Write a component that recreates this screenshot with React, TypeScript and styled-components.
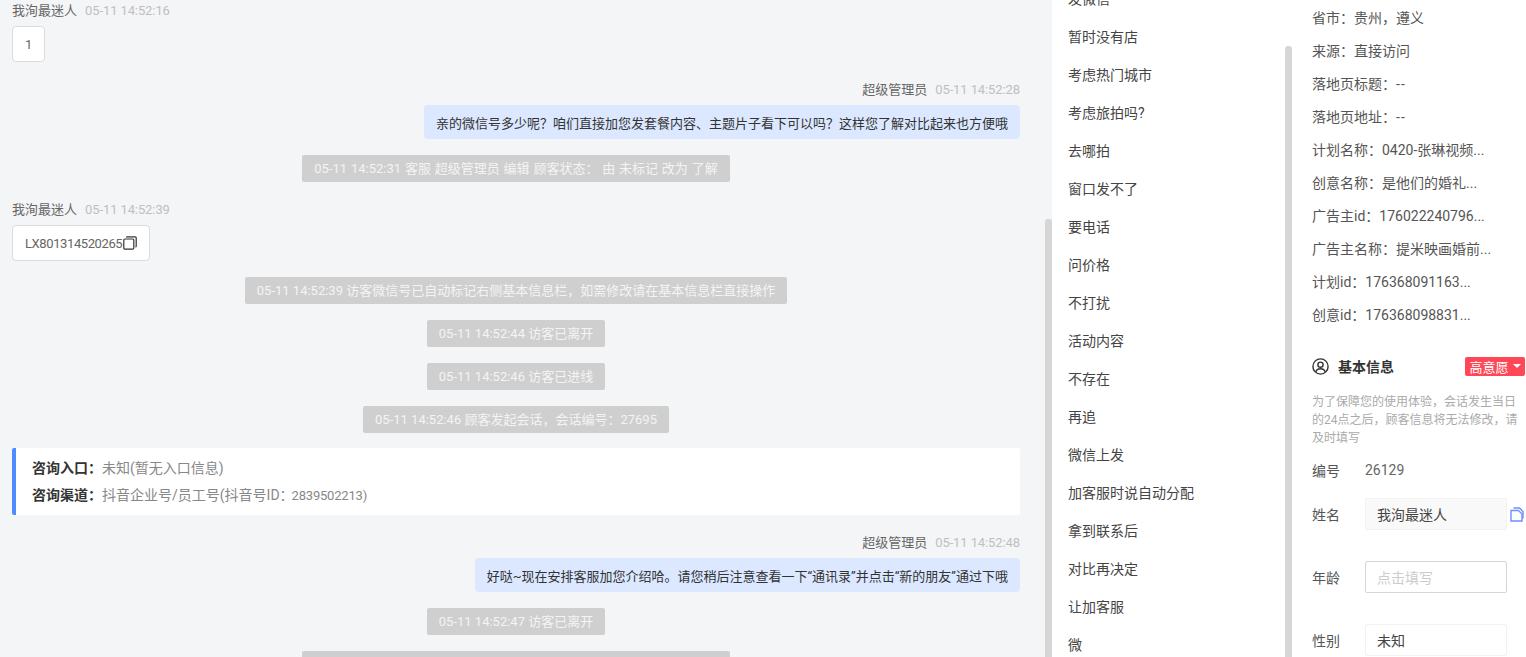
import React from 'react';
import styled, { createGlobalStyle } from 'styled-components';

const GlobalStyle = createGlobalStyle`
  html, body {
    margin: 0;
    padding: 0;
    height: 100%;
    overflow: hidden;
    background: #f4f5f7;
  }
  * {
    box-sizing: border-box;
  }
  body {
    font-family: Roboto, "Noto Sans CJK SC", sans-serif;
    font-size: 13px;
    color: #333;
  }
`;

const Layout = styled.div`
  display: grid;
  grid-template-columns: 1052px 240px 234px;
  width: 1526px;
  height: 657px;
  overflow: hidden;
`;

const ChatPane = styled.main`
  position: relative;
  height: 657px;
  overflow: hidden;
  padding: 1px 32px 0 12px;
  display: flex;
  flex-direction: column;
  background: #f4f5f7;
`;

const Scrollbar = styled.div<{ $top: number }>`
  position: absolute;
  top: ${(p) => p.$top}px;
  right: 0;
  bottom: 0;
  width: 7px;
  background: #d6d6d6;
  border-radius: 3px 3px 0 0;
`;

const Message = styled.div<{ $mine?: boolean }>`
  display: flex;
  flex-direction: column;
  flex-shrink: 0;
  align-items: ${(p) => (p.$mine ? 'flex-end' : 'flex-start')};
  margin-top: 18px;

  &:first-child {
    margin-top: 0;
  }
`;

const Meta = styled.div`
  display: flex;
  gap: 8px;
  height: 18px;
  line-height: 20px;
  margin-bottom: 7px;
  color: #666;
  white-space: nowrap;
`;

const Time = styled.span`
  color: #c0c0c0;
  letter-spacing: -0.1px;
`;

const IncomingBubble = styled.div`
  display: flex;
  align-items: center;
  height: 36px;
  padding: 0 12px;
  background: #fff;
  border: 1px solid #dcdcdc;
  border-radius: 4px;
  color: #666;
  letter-spacing: -0.4px;
  white-space: nowrap;
`;

const OutgoingBubble = styled.div`
  display: flex;
  align-items: center;
  height: 34px;
  padding: 0 12px;
  background: #dbe8ff;
  border-radius: 4px;
  color: #333;
  white-space: nowrap;
`;

const SystemNote = styled.div<{ $spaced?: boolean }>`
  align-self: center;
  flex-shrink: 0;
  height: 27px;
  line-height: 27px;
  margin-top: 16px;
  padding: 0 12px;
  background: #cfcfcf;
  border-radius: 2px;
  color: #f4f4f4;
  word-spacing: ${(p) => (p.$spaced ? '0.6px' : '0')};
  white-space: nowrap;
`;

const EntryCard = styled.section`
  flex-shrink: 0;
  height: 67px;
  margin-top: 15px;
  padding: 7px 16px;
  background: #fff;
  border-left: 4px solid #4e8cff;
  border-radius: 2px;
`;

const EntryLine = styled.div`
  height: 27px;
  line-height: 27px;
  font-size: 14px;
  color: #888;
  white-space: nowrap;

  b {
    font-weight: 700;
    color: #333;
  }
`;

const EntryNumber = styled.span`
  font-size: 13px;
  letter-spacing: -0.2px;
  margin-left: -2px;
`;

const ListPane = styled.aside`
  position: relative;
  height: 657px;
  overflow: hidden;
  background: #fff;
`;

const ReplyList = styled.ul`
  list-style: none;
  margin: -20px 0 0;
  padding: 0 0 0 16px;
`;

const ReplyItem = styled.li`
  height: 38px;
  line-height: 38px;
  font-size: 14px;
  color: #444;
  white-space: nowrap;
`;

const InfoPane = styled.aside`
  height: 657px;
  overflow: hidden;
  background: #fff;
  padding: 2px 0 0 20px;
  font-size: 14px;
`;

const SourceRow = styled.div`
  height: 33px;
  line-height: 33px;
  color: #555;
  white-space: nowrap;
`;

const EmptyValue = styled.span`
  font-variant-ligatures: none;
  letter-spacing: 1.2px;
`;

const InfoHeader = styled.div`
  display: flex;
  align-items: center;
  height: 20px;
  margin-top: 24px;
`;

const InfoTitle = styled.h3`
  flex: 1;
  margin: 0 0 0 9px;
  font-size: 14px;
  font-weight: 700;
  color: #333;
`;

const IntentTag = styled.div`
  display: flex;
  align-items: center;
  justify-content: center;
  gap: 4px;
  width: 60px;
  height: 19px;
  margin-right: 1px;
  background: #ff4757;
  border-radius: 2px;
  font-size: 13px;
  color: #fff;
`;

const Caret = styled.span`
  width: 0;
  height: 0;
  border-left: 4px solid transparent;
  border-right: 4px solid transparent;
  border-top: 4.5px solid #fff;
`;

const Notice = styled.p`
  width: 210px;
  margin: 17px 0 0;
  font-size: 12px;
  line-height: 18px;
  color: #aaa;
`;

const FieldRow = styled.div<{ $gap: number }>`
  display: flex;
  align-items: center;
  height: 32px;
  margin-top: ${(p) => p.$gap}px;
`;

const FieldLabel = styled.label`
  width: 53px;
  flex-shrink: 0;
  color: #555;
`;

const FieldValue = styled.span`
  color: #666;
`;

const FieldBox = styled.div<{ $variant: 'filled' | 'input' | 'plain' }>`
  display: flex;
  align-items: center;
  width: 142px;
  height: 32px;
  padding: 0 11px;
  border-radius: 2px;
  border: 1px solid ${(p) => (p.$variant === 'input' ? '#d6d6d6' : '#f2f2f2')};
  background: ${(p) => (p.$variant === 'filled' ? '#f9f9f9' : '#fff')};
  color: ${(p) => (p.$variant === 'input' ? '#ccc' : '#444')};
`;

const CopyButton = styled.span`
  display: flex;
  margin-left: 3px;
`;

const CopyInline = styled.svg`
  margin-left: 1px;
`;

const sources = [
  '省市：贵州，遵义',
  '来源：直接访问',
  '落地页标题：--',
  '落地页地址：--',
  '计划名称：0420-张琳视频...',
  '创意名称：是他们的婚礼...',
  '广告主id：176022240796...',
  '广告主名称：提米映画婚前...',
  '计划id：176368091163...',
  '创意id：176368098831...',
];

const replies = [
  '发微信',
  '暂时没有店',
  '考虑热门城市',
  '考虑旅拍吗?',
  '去哪拍',
  '窗口发不了',
  '要电话',
  '问价格',
  '不打扰',
  '活动内容',
  '不存在',
  '再追',
  '微信上发',
  '加客服时说自动分配',
  '拿到联系后',
  '对比再决定',
  '让加客服',
  '微',
];

const UserCircleIcon = () => (
  <svg width="17" height="17" viewBox="0 0 17 17" fill="none" stroke="#333" strokeWidth="1.4">
    <circle cx="8.5" cy="8.5" r="7.6" />
    <circle cx="8.5" cy="6.7" r="2.6" />
    <path d="M3.8 14.2c.5-2.4 2.4-3.4 4.7-3.4s4.2 1 4.7 3.4" />
  </svg>
);

export default function App() {
  return (
    <Layout>
      <GlobalStyle />
      <ChatPane>
        <Message>
          <Meta>
            <span>我洵最迷人</span>
            <Time>05-11 14:52:16</Time>
          </Meta>
          <IncomingBubble>1</IncomingBubble>
        </Message>
        <Message $mine>
          <Meta>
            <span>超级管理员</span>
            <Time>05-11 14:52:28</Time>
          </Meta>
          <OutgoingBubble>亲的微信号多少呢？咱们直接加您发套餐内容、主题片子看下可以吗？这样您了解对比起来也方便哦</OutgoingBubble>
        </Message>
        <SystemNote $spaced>05-11 14:52:31 客服 超级管理员 编辑 顾客状态： 由 未标记 改为 了解</SystemNote>
        <Message>
          <Meta>
            <span>我洵最迷人</span>
            <Time>05-11 14:52:39</Time>
          </Meta>
          <IncomingBubble>
            LX801314520265
            <CopyInline width="14" height="14" viewBox="0 0 14 14" fill="none" stroke="#333" strokeWidth="1.2">
              <rect x="0.8" y="3" width="10" height="10.2" rx="1.2" />
              <path d="M3.4 1.6c0-.5.3-.8.8-.8h8c.5 0 1 .4 1 1v8.2c0 .5-.3.9-.8.9" />
            </CopyInline>
          </IncomingBubble>
        </Message>
        <SystemNote>05-11 14:52:39 访客微信号已自动标记右侧基本信息栏，如需修改请在基本信息栏直接操作</SystemNote>
        <SystemNote>05-11 14:52:44 访客已离开</SystemNote>
        <SystemNote>05-11 14:52:46 访客已进线</SystemNote>
        <SystemNote>05-11 14:52:46 顾客发起会话，会话编号：27695</SystemNote>
        <EntryCard>
          <EntryLine>
            <b>咨询入口：</b>未知(暂无入口信息)
          </EntryLine>
          <EntryLine>
            <b>咨询渠道：</b>抖音企业号/员工号(抖音号ID：<EntryNumber>2839502213)</EntryNumber>
          </EntryLine>
        </EntryCard>
        <Message $mine>
          <Meta>
            <span>超级管理员</span>
            <Time>05-11 14:52:48</Time>
          </Meta>
          <OutgoingBubble>好哒~现在安排客服加您介绍哈。请您稍后注意查看一下“通讯录”并点击“新的朋友”通过下哦</OutgoingBubble>
        </Message>
        <SystemNote>05-11 14:52:47 访客已离开</SystemNote>
        <SystemNote $spaced>05-11 14:52:50 客服 超级管理员 编辑 顾客状态： 由 了解 改为 未标记</SystemNote>
        <Scrollbar $top={219} />
      </ChatPane>

      <ListPane>
        <ReplyList>
          {replies.map((reply) => (
            <ReplyItem key={reply}>{reply}</ReplyItem>
          ))}
        </ReplyList>
        <Scrollbar $top={46} />
      </ListPane>

      <InfoPane>
        {sources.map((row) => (
          <SourceRow key={row}>
            {row.endsWith('--') ? (
              <>
                {row.slice(0, -2)}
                <EmptyValue>--</EmptyValue>
              </>
            ) : (
              row
            )}
          </SourceRow>
        ))}
        <InfoHeader>
          <UserCircleIcon />
          <InfoTitle>基本信息</InfoTitle>
          <IntentTag>
            高意愿
            <Caret />
          </IntentTag>
        </InfoHeader>
        <Notice>为了保障您的使用体验，会话发生当日的24点之后，顾客信息将无法修改，请及时填写</Notice>
        <FieldRow $gap={7}>
          <FieldLabel>编号</FieldLabel>
          <FieldValue>26129</FieldValue>
        </FieldRow>
        <FieldRow $gap={12}>
          <FieldLabel>姓名</FieldLabel>
          <FieldBox $variant="filled">我洵最迷人</FieldBox>
          <CopyButton>
            <svg width="14" height="15" viewBox="0 0 14 15" fill="none" stroke="#6f8dff" strokeWidth="1.4">
              <path d="M3.5 1h6L13 4.5v7" />
              <path d="M1 3.5h7.5L12 7v7H1z" fill="#fff" />
            </svg>
          </CopyButton>
        </FieldRow>
        <FieldRow $gap={31}>
          <FieldLabel>年龄</FieldLabel>
          <FieldBox $variant="input">点击填写</FieldBox>
        </FieldRow>
        <FieldRow $gap={31}>
          <FieldLabel>性别</FieldLabel>
          <FieldBox $variant="plain">未知</FieldBox>
        </FieldRow>
      </InfoPane>
    </Layout>
  );
}
